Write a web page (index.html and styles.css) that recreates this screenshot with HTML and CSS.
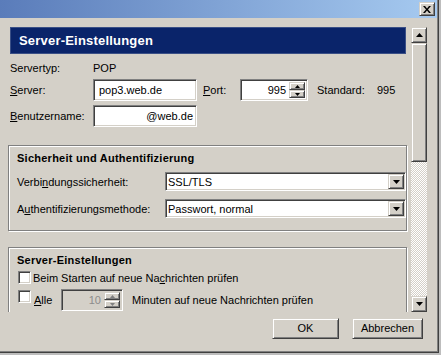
FILE: index.html
```html
<!DOCTYPE html>
<html lang="de">
<head>
  <meta charset="UTF-8">
  <title>Server-Einstellungen</title>
  <link rel="stylesheet" href="styles.css">
</head>
<body>
  <div class="window">
    <div class="titlebar">
      <div class="close-btn">
        <svg width="8" height="7" viewBox="0 0 8 7"><path d="M0 0h2l2 2.4 2-2.4h2l-3 3.5 3 3.5h-2l-2-2.4-2 2.4h-2l3-3.5z" fill="#000"/></svg>
      </div>
    </div>
    <div class="client">
      <div class="scroll-area">
        <div class="content">
          <div class="page-header">Server-Einstellungen</div>

          <div class="server-form">
            <div class="form-row type-row">
              <span class="label">Servertyp:</span>
              <span class="value">POP</span>
            </div>
            <div class="form-row server-row">
              <span class="label"><u>S</u>erver:</span>
              <div class="textbox server-box">pop3.web.de</div>
              <span class="port-label"><u>P</u>ort:</span>
              <div class="textbox port-box">
                <span class="num">995</span>
                <div class="spinner">
                  <div class="spin-btn"><svg width="5" height="3" viewBox="0 0 5 3"><path d="M2.5 0L5 3H0z"/></svg></div>
                  <div class="spin-btn"><svg width="5" height="3" viewBox="0 0 5 3"><path d="M0 0h5L2.5 3z"/></svg></div>
                </div>
              </div>
              <span class="std-label">Standard:</span>
              <span class="value">995</span>
            </div>
            <div class="form-row">
              <span class="label"><u>B</u>enutzername:</span>
              <div class="textbox user-box">@web.de</div>
            </div>
          </div>

          <div class="groupbox security">
            <div class="group-title">Sicherheit und Authentifizierung</div>
            <div class="sec-row first">
              <span class="sec-label">Verbi<u>n</u>dungssicherheit:</span>
              <div class="select">
                <span class="select-text">SSL/TLS</span>
                <div class="drop-btn"><svg width="7" height="4" viewBox="0 0 7 4"><path d="M0 0h7L3.5 4z"/></svg></div>
              </div>
            </div>
            <div class="sec-row">
              <span class="sec-label">A<u>u</u>thentifizierungsmethode:</span>
              <div class="select">
                <span class="select-text">Passwort, normal</span>
                <div class="drop-btn"><svg width="7" height="4" viewBox="0 0 7 4"><path d="M0 0h7L3.5 4z"/></svg></div>
              </div>
            </div>
          </div>

          <div class="groupbox options">
            <div class="group-title">Server-Einstellungen</div>
            <div class="check-row">
              <span class="checkbox"></span>
              <span class="check-text">Beim Starten auf neue Na<u>c</u>hrichten prüfen</span>
            </div>
            <div class="check-row interval-row">
              <span class="checkbox"></span>
              <span class="alle"><u>A</u>lle</span>
              <div class="textbox interval-box">
                <span class="num">10</span>
                <div class="spinner">
                  <div class="spin-btn"><svg width="5" height="3" viewBox="0 0 5 3"><path d="M2.5 0L5 3H0z" fill="#808080"/></svg></div>
                  <div class="spin-btn"><svg width="5" height="3" viewBox="0 0 5 3"><path d="M0 0h5L2.5 3z" fill="#808080"/></svg></div>
                </div>
              </div>
              <span class="minutes">Minuten auf neue Nachrichten prüfen</span>
            </div>
          </div>
        </div>

        <div class="scrollbar">
          <div class="sb-btn"><svg width="7" height="4" viewBox="0 0 7 4"><path d="M3.5 0L7 4H0z"/></svg></div>
          <div class="sb-thumb"></div>
          <div class="sb-track"></div>
          <div class="sb-btn"><svg width="7" height="4" viewBox="0 0 7 4"><path d="M0 0h7L3.5 4z"/></svg></div>
        </div>
      </div>

      <div class="buttons">
        <div class="btn btn-ok">OK</div>
        <div class="btn btn-cancel">Abbrechen</div>
      </div>
    </div>
  </div>
</body>
</html>
```

FILE: styles.css
```css
* {
  margin: 0;
  padding: 0;
  box-sizing: border-box;
}

html, body {
  width: 441px;
  height: 355px;
  overflow: hidden;
}

body {
  background-color: #bdbdbd;
  font-family: 'Liberation Sans', Arial, sans-serif;
  font-size: 11px;
  color: #000;
}

u {
  text-underline-offset: 1px;
}

.window {
  width: 439px;
  height: 353px;
  background: #d4d0c8;
  box-shadow: inset -1px -1px #404040, inset -2px -2px #808080;
  display: flex;
  flex-direction: column;
}

.titlebar {
  height: 18px;
  margin-right: 2px;
  padding-right: 2px;
  background: linear-gradient(to right, #5a7cba, #a6caf0);
  display: flex;
  align-items: center;
  justify-content: flex-end;
}

.close-btn,
.spin-btn,
.drop-btn,
.sb-btn,
.sb-thumb,
.btn {
  background: #d4d0c8;
  border: 1px solid;
  border-color: #d4d0c8 #404040 #404040 #d4d0c8;
  box-shadow: inset 1px 1px #fff, inset -1px -1px #808080;
}

.close-btn {
  width: 16px;
  height: 14px;
  display: flex;
  align-items: center;
  justify-content: center;
}

.client {
  flex: 1;
  padding: 9px 12px 0 2px;
  display: flex;
  flex-direction: column;
}

.scroll-area {
  height: 285px;
  display: flex;
}

.content {
  flex: 1;
  overflow: hidden;
  padding: 0 4px 0 6px;
}

/* page header */

.page-header {
  height: 27px;
  margin: 0 1px 0 2px;
  padding-left: 8px;
  background: #0a246a;
  border: 1px solid #3a4f86;
  color: #fff;
  font-weight: bold;
  font-size: 13px;
  line-height: 26px;
  letter-spacing: 0.2px;
  overflow: hidden;
}

/* server form */

.server-form {
  margin-top: 5px;
  padding-left: 2px;
}

.form-row {
  display: flex;
  align-items: center;
  height: 22px;
  margin-top: 4px;
}

.type-row {
  height: 18px;
  margin-top: 0;
}

.server-row {
  margin-top: 2px;
}

.label {
  width: 83px;
}

.textbox,
.select,
.checkbox {
  background: #fff;
  border: 1px solid;
  border-color: #808080 #fff #fff #808080;
  box-shadow: inset 1px 1px #404040, inset -1px -1px #d4d0c8;
}

.textbox {
  height: 22px;
  display: flex;
  align-items: center;
  padding: 0 3px 0 5px;
}

.server-box {
  width: 104px;
}

.user-box {
  width: 104px;
  justify-content: flex-end;
}

.port-label {
  width: 37px;
  margin-left: 6px;
}

.port-box {
  width: 68px;
  justify-content: flex-end;
  padding-right: 2px;
}

.num {
  margin-right: 3px;
}

.std-label {
  width: 60px;
  margin-left: 9px;
}

.spinner {
  width: 16px;
  height: 16px;
  display: flex;
  flex-direction: column;
}

.spin-btn {
  flex: 1;
  display: flex;
  align-items: center;
  justify-content: center;
}

/* group boxes */

.groupbox {
  border: 1px solid #808080;
  box-shadow: inset 1px 1px #fff, 1px 1px #fff;
  padding: 4px 0 12px 8px;
  margin-top: 18px;
}

.options {
  margin-top: 16px;
  padding-bottom: 30px;
}

.group-title {
  font-weight: bold;
  line-height: 16px;
  letter-spacing: 0.25px;
}

.sec-row {
  display: flex;
  align-items: center;
  height: 19px;
  margin-top: 8px;
}

.sec-row.first {
  margin-top: 6px;
}

.sec-label {
  width: 148px;
}

.select {
  flex: 1;
  height: 19px;
  display: flex;
  align-items: center;
  padding: 0 1px 0 2px;
}

.select-text {
  flex: 1;
}

.drop-btn {
  width: 16px;
  height: 15px;
  display: flex;
  align-items: center;
  justify-content: center;
}

.check-row {
  display: flex;
  align-items: center;
  height: 13px;
  margin-top: 3px;
  margin-left: 1px;
}

.checkbox {
  width: 13px;
  height: 13px;
}

.check-text {
  margin-left: 2px;
}

.interval-row {
  height: 22px;
  margin-top: 5px;
}

.interval-row .checkbox {
  align-self: flex-start;
  margin-top: 1px;
}

.alle {
  width: 27px;
  margin-left: 3px;
}

.interval-box {
  width: 62px;
  background: #d4d0c8;
  color: #8c8c8c;
  justify-content: flex-end;
  padding-right: 2px;
}

.minutes {
  margin-left: 9px;
}

/* scrollbar */

.scrollbar {
  width: 16px;
  display: flex;
  flex-direction: column;
}

.sb-btn {
  height: 16px;
  display: flex;
  align-items: center;
  justify-content: center;
}

.sb-thumb {
  height: 119px;
}

.sb-track {
  flex: 1;
  background: conic-gradient(#fff 25%, #d4d0c8 0 50%, #fff 0 75%, #d4d0c8 0);
  background-size: 2px 2px;
}

/* dialog buttons */

.buttons {
  display: flex;
  justify-content: flex-end;
  gap: 13px;
  margin-top: 6px;
  padding-right: 4px;
}

.btn {
  height: 21px;
  line-height: 19px;
  text-align: center;
}

.btn-ok {
  width: 67px;
}

.btn-cancel {
  width: 71px;
}
```
